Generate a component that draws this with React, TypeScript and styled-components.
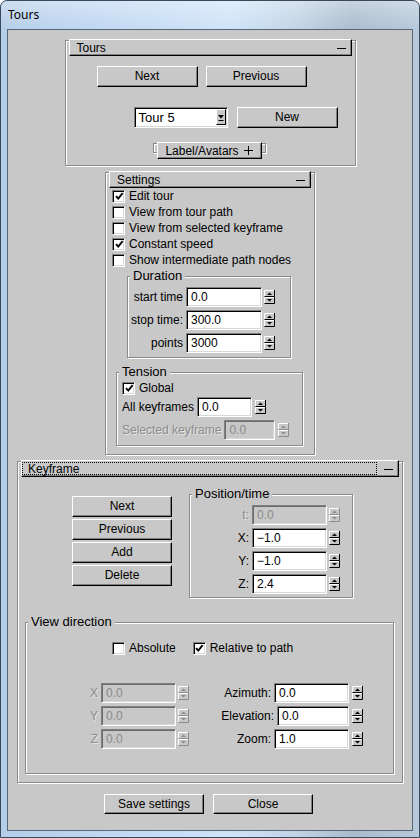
import React from "react";
import styled, { createGlobalStyle } from "styled-components";

const Global = createGlobalStyle`
  html, body { margin: 0; padding: 0; background: #ffffff; }
  body { font-family: "Liberation Sans", Arial, sans-serif; font-size: 12px; color: #000; }
  * { box-sizing: border-box; }
`;

const Window = styled.div`
  width: 420px;
  height: 838px;
  display: flex;
  flex-direction: column;
  border: 1px solid #38495c;
  border-radius: 7px 7px 0 0;
  padding: 0 6px 6px;
  background:
    linear-gradient(180deg, rgba(255, 255, 255, 0.35) 0, rgba(255, 255, 255, 0) 30px),
    linear-gradient(90deg, #b4cde8 0%, #c0d8f2 25%, #cfe3f8 55%, #c2d4e6 70%, #a9bbcd 84%, #b6c8da 100%);
`;

const TitleBar = styled.div`
  height: 28px;
  display: flex;
  align-items: center;
  padding: 0 0 2px 1px;
  font-family: "Noto Sans", "Open Sans", sans-serif;
  font-size: 12px;
  color: #000;
`;

const Client = styled.div`
  flex: 1;
  background: #c8c8c8;
  border: 1px solid #56677a;
  display: flex;
  flex-direction: column;
  align-items: center;
  padding-top: 9px;
`;

/* ---------- rollouts ---------- */

const Rollout = styled.div<{ $w: number; $mt?: number; $pb?: number }>`
  width: ${(p) => p.$w}px;
  margin-top: ${(p) => p.$mt ?? 0}px;
  border: 1px solid #8a8a8a;
  box-shadow: inset 1px 1px 0 #fff, 1px 1px 0 #fff;
  padding: 0 3px ${(p) => p.$pb ?? 0}px;
  display: flex;
  flex-direction: column;
`;

const CollapsedRollout = styled.div<{ $w: number }>`
  width: ${(p) => p.$w}px;
  height: 10px;
  border: 1px solid #8a8a8a;
  box-shadow: inset 1px 1px 0 #fff, 1px 1px 0 #fff;
  padding: 0 3px;
`;

const RollHeader = styled.div<{ $pl?: number; $center?: boolean }>`
  margin-top: -2px;
  height: 17px;
  flex: none;
  display: flex;
  align-items: center;
  justify-content: ${(p) => (p.$center ? "center" : "space-between")};
  gap: 5px;
  background: #c8c8c8;
  border: 1px solid;
  border-color: #fff #000 #000 #fff;
  box-shadow: inset -1px -1px 0 #808080;
  padding: 0 5px 0 ${(p) => p.$pl ?? 7}px;
  line-height: 14px;
  white-space: nowrap;
`;

const FocusTitle = styled.div`
  flex: 1;
  align-self: stretch;
  margin: 1px 2px 1px 0;
  border: 1px dotted #000;
  padding-left: 5px;
  display: flex;
  align-items: center;
`;

const MinusIcon = () => (
  <svg width="9" height="9" viewBox="0 0 9 9">
    <path d="M0 5.5H9" stroke="#000" strokeWidth="1" />
  </svg>
);

const PlusIcon = () => (
  <svg width="9" height="9" viewBox="0 0 9 9">
    <path d="M0 4.5H9M4.5 0V9" stroke="#000" strokeWidth="1" />
  </svg>
);

/* ---------- basic controls ---------- */

const Button = styled.div<{ $w: number; $h?: number }>`
  width: ${(p) => p.$w}px;
  height: ${(p) => p.$h ?? 21}px;
  flex: none;
  display: flex;
  align-items: center;
  justify-content: center;
  background: #c8c8c8;
  border: 1px solid;
  border-color: #fff #000 #000 #fff;
  box-shadow: inset -1px -1px 0 #808080;
  padding-bottom: 1px;
  white-space: nowrap;
`;

const Sep = styled.div`
  width: 4px;
  margin: 0 1px 0 3px;
  border-left: 1px solid #fff;
  border-right: 1px solid #8a8a8a;
`;

const Row = styled.div<{ $mt?: number; $ml?: number; $gap?: number; $h?: number }>`
  display: flex;
  align-items: center;
  margin-top: ${(p) => p.$mt ?? 0}px;
  margin-left: ${(p) => p.$ml ?? 0}px;
  gap: ${(p) => p.$gap ?? 0}px;
  ${(p) => (p.$h ? `height: ${p.$h}px;` : "")}
`;

const Field = styled.div<{ $w: number; $disabled?: boolean }>`
  width: ${(p) => p.$w}px;
  height: 20px;
  flex: none;
  display: flex;
  align-items: center;
  padding: 0 0 1px 4px;
  background: ${(p) => (p.$disabled ? "#c8c8c8" : "#fff")};
  color: ${(p) => (p.$disabled ? "#8a8a8a" : "#000")};
  border: 1px solid;
  border-color: #808080 #fff #fff #808080;
  box-shadow: inset 1px 1px 0 ${(p) => (p.$disabled ? "#6a6a6a" : "#000")}, inset -1px -1px 0 #d8d8d8;
  white-space: nowrap;
`;

const Label = styled.span<{ $disabled?: boolean }>`
  white-space: nowrap;
  color: ${(p) => (p.$disabled ? "#8c8c8c" : "#000")};
  text-shadow: ${(p) => (p.$disabled ? "1px 1px 0 #e4e4e4" : "none")};
`;

const SpinWrap = styled.span<{ $ml?: number }>`
  display: inline-flex;
  flex: none;
  margin-left: ${(p) => p.$ml ?? 3}px;
`;

const Spinner = ({ disabled, ml }: { disabled?: boolean; ml?: number }) => {
  const ink = disabled ? "#8c8c8c" : "#000";
  const edge = disabled ? "#8c8c8c" : "#000";
  return (
    <SpinWrap $ml={ml}>
      <svg width="11" height="14" viewBox="0 0 11 14">
        <rect x="0" y="0" width="11" height="14" fill="#c8c8c8" />
        <path d="M0.5 6.5V0.5H10" stroke="#fff" fill="none" />
        <path d="M0.5 6.5H10.5V0" stroke={edge} fill="none" />
        <path d="M0.5 13V7.5H10" stroke="#fff" fill="none" />
        <path d="M0.5 13.5H10.5V7" stroke={edge} fill="none" />
        <path d="M3 5L5.5 2.5L8 5Z" fill={ink} />
        <path d="M3 9L5.5 11.5L8 9Z" fill={ink} />
      </svg>
    </SpinWrap>
  );
};

const CheckBox = styled.span`
  width: 13px;
  height: 13px;
  flex: none;
  display: inline-flex;
  align-items: center;
  justify-content: center;
  background: #fff;
  border: 1px solid;
  border-color: #808080 #fff #fff #808080;
  box-shadow: inset 1px 1px 0 #000, inset -1px -1px 0 #d8d8d8;
`;

const Check = ({ on }: { on?: boolean }) => (
  <CheckBox>
    {on && (
      <svg width="9" height="9" viewBox="0 0 9 9" style={{ marginLeft: 1, marginTop: 1 }}>
        <path d="M1 4.2L3.3 6.6L7.6 1.2" stroke="#000" strokeWidth="1.9" fill="none" />
      </svg>
    )}
  </CheckBox>
);

const CheckRow = styled.div<{ $ml?: number; $h?: number }>`
  display: flex;
  align-items: center;
  gap: 4px;
  height: ${(p) => p.$h ?? 16}px;
  margin-left: ${(p) => p.$ml ?? 0}px;
  white-space: nowrap;
`;

/* ---------- list box ---------- */

const ListBox = styled.div`
  width: 94px;
  height: 21px;
  flex: none;
  display: flex;
  background: #fff;
  border: 1px solid;
  border-color: #808080 #fff #fff #808080;
  box-shadow: inset 1px 1px 0 #000, inset -1px -1px 0 #d8d8d8;
  padding: 1px 1px 2px 1px;
`;

const ListText = styled.div`
  flex: 1;
  display: flex;
  align-items: center;
  padding-left: 3px;
  font-size: 13px;
`;

const ListArrow = styled.div`
  width: 10px;
  display: flex;
  align-items: center;
  justify-content: center;
  background: #c8c8c8;
  border: 1px solid;
  border-color: #fff #000 #000 #fff;
`;

/* ---------- group boxes ---------- */

const Group = styled.div<{ $w: number; $mt?: number; $ml?: number; $pb?: number }>`
  width: ${(p) => p.$w}px;
  flex: none;
  margin-top: ${(p) => p.$mt ?? 0}px;
  margin-left: ${(p) => p.$ml ?? 0}px;
  padding-bottom: ${(p) => p.$pb ?? 4}px;
  border: 1px solid #8a8a8a;
  box-shadow: inset 1px 1px 0 #fff, 1px 1px 0 #fff;
  display: flex;
  flex-direction: column;
`;

const Legend = styled.div`
  align-self: flex-start;
  margin: -8px 0 0 2px;
  padding: 0 3px;
  height: 14px;
  line-height: 14px;
  font-size: 13px;
  background: #c8c8c8;
  white-space: nowrap;
`;

const FieldGrid = styled.div<{ $mt?: number; $lw: number }>`
  display: grid;
  grid-template-columns: ${(p) => p.$lw}px auto auto;
  align-items: center;
  row-gap: 3px;
  margin-top: ${(p) => p.$mt ?? 4}px;
  justify-content: start;
`;

const GridLabel = styled(Label)`
  justify-self: end;
  margin-right: 3px;
`;

const Column = styled.div<{ $ml?: number; $mt?: number; $gap?: number }>`
  display: flex;
  flex-direction: column;
  margin-left: ${(p) => p.$ml ?? 0}px;
  margin-top: ${(p) => p.$mt ?? 0}px;
  gap: ${(p) => p.$gap ?? 0}px;
`;

const RightRows = styled.div`
  display: flex;
  flex-direction: column;
  align-items: flex-end;
  gap: 3px;
  margin-left: auto;
  margin-right: 30px;
`;

const RightRow = styled.div`
  display: flex;
  align-items: center;
  height: 20px;
`;

const Footer = styled.div`
  display: flex;
  gap: 9px;
  margin: 11px 3px 0 0;
`;

type SpinField = { label: string; value: string; disabled?: boolean };

const durationRows: SpinField[] = [
  { label: "start time", value: "0.0" },
  { label: "stop time:", value: "300.0" },
  { label: "points", value: "3000" },
];

const positionRows: SpinField[] = [
  { label: "t:", value: "0.0", disabled: true },
  { label: "X:", value: "\u22121.0" },
  { label: "Y:", value: "\u22121.0" },
  { label: "Z:", value: "2.4" },
];

const viewLeft: SpinField[] = [
  { label: "X", value: "0.0", disabled: true },
  { label: "Y", value: "0.0", disabled: true },
  { label: "Z", value: "0.0", disabled: true },
];

const viewRight: (SpinField & { w: number })[] = [
  { label: "Azimuth:", value: "0.0", w: 75 },
  { label: "Elevation:", value: "0.0", w: 72 },
  { label: "Zoom:", value: "1.0", w: 75 },
];

const settingsChecks = [
  { label: "Edit tour", on: true },
  { label: "View from tour path", on: false },
  { label: "View from selected keyframe", on: false },
  { label: "Constant speed", on: true },
  { label: "Show intermediate path nodes", on: false },
];

const renderGrid = (rows: SpinField[], fw: number) =>
  rows.map((r) => (
    <React.Fragment key={r.label}>
      <GridLabel $disabled={r.disabled}>{r.label}</GridLabel>
      <Field $w={fw} $disabled={r.disabled}>{r.value}</Field>
      <Spinner disabled={r.disabled} ml={2} />
    </React.Fragment>
  ));

export default function App() {
  return (
    <>
      <Global />
      <Window>
        <TitleBar>Tours</TitleBar>
        <Client>
          {/* Tours rollout */}
          <Rollout $w={291} $mt={1} $pb={12}>
            <RollHeader>
              <span>Tours</span>
              <MinusIcon />
            </RollHeader>
            <Row $mt={10} $ml={28}>
              <Button $w={101}>Next</Button>
              <Sep />
              <Button $w={101}>Previous</Button>
            </Row>
            <Row $mt={20} $ml={65} $gap={9}>
              <ListBox>
                <ListText>Tour 5</ListText>
                <ListArrow>
                  <svg width="6" height="9" viewBox="0 0 6 9">
                    <path d="M0 2H6L3 5.5Z" fill="#000" />
                    <path d="M0.5 7.5H5.5" stroke="#000" />
                  </svg>
                </ListArrow>
              </ListBox>
              <Button $w={101}>New</Button>
            </Row>
            <Row $mt={15} $ml={84}>
              <CollapsedRollout $w={113}>
                <RollHeader $center $pl={5}>
                  <span>Label/Avatars</span>
                  <PlusIcon />
                </RollHeader>
              </CollapsedRollout>
            </Row>
          </Rollout>

          {/* Settings rollout */}
          <Rollout $w={210} $mt={6} $pb={8}>
            <RollHeader>
              <span>Settings</span>
              <MinusIcon />
            </RollHeader>
            <Column $ml={3}>
              {settingsChecks.map((c) => (
                <CheckRow key={c.label}>
                  <Check on={c.on} />
                  <span>{c.label}</span>
                </CheckRow>
              ))}
            </Column>
            <Group $w={164} $mt={8} $ml={18} $pb={4}>
              <Legend>Duration</Legend>
              <FieldGrid $lw={58} $mt={4}>
                {renderGrid(durationRows, 76)}
              </FieldGrid>
            </Group>
            <Group $w={187} $mt={14} $ml={7} $pb={5}>
              <Legend>Tension</Legend>
              <CheckRow $ml={5} $h={16} style={{ marginTop: 1 }}>
                <Check on />
                <span>Global</span>
              </CheckRow>
              <Row $mt={1} $ml={5}>
                <Label>All keyframes</Label>
                <Field $w={55} style={{ marginLeft: 3 }}>0.0</Field>
                <Spinner ml={3} />
              </Row>
              <Row $mt={3} $ml={5}>
                <Label $disabled>Selected keyframe</Label>
                <Field $w={51} $disabled style={{ marginLeft: 3 }}>0.0</Field>
                <Spinner disabled ml={3} />
              </Row>
            </Group>
          </Rollout>

          {/* Keyframe rollout */}
          <Rollout $w={386} $mt={6} $pb={8}>
            <RollHeader $pl={0}>
              <FocusTitle>Keyframe</FocusTitle>
              <MinusIcon />
            </RollHeader>
            <Row style={{ alignItems: "flex-start" }}>
              <Column $ml={51} $mt={19} $gap={2}>
                <Button $w={100}>Next</Button>
                <Button $w={100}>Previous</Button>
                <Button $w={100}>Add</Button>
                <Button $w={100}>Delete</Button>
              </Column>
              <Group $w={164} $mt={17} $ml={17} $pb={3}>
                <Legend>Position/time</Legend>
                <FieldGrid $lw={62} $mt={4}>
                  {renderGrid(positionRows, 75)}
                </FieldGrid>
              </Group>
            </Row>
            <Group $w={369} $mt={24} $ml={4} $pb={24}>
              <Legend>View direction</Legend>
              <Row $mt={11} $ml={86} $gap={17}>
                <CheckRow>
                  <Check />
                  <span>Absolute</span>
                </CheckRow>
                <CheckRow>
                  <Check on />
                  <span>Relative to path</span>
                </CheckRow>
              </Row>
              <Row $mt={27} style={{ alignItems: "flex-start" }}>
                <FieldGrid $lw={11} $mt={0} style={{ marginLeft: 64 }}>
                  {renderGrid(viewLeft, 75)}
                </FieldGrid>
                <RightRows>
                  {viewRight.map((r) => (
                    <RightRow key={r.label}>
                      <Label>{r.label}</Label>
                      <Field $w={r.w} style={{ marginLeft: 3 }}>{r.value}</Field>
                      <Spinner ml={3} />
                    </RightRow>
                  ))}
                </RightRows>
              </Row>
            </Group>
          </Rollout>

          <Footer>
            <Button $w={100} $h={20}>Save settings</Button>
            <Button $w={100} $h={20}>Close</Button>
          </Footer>
        </Client>
      </Window>
    </>
  );
}
